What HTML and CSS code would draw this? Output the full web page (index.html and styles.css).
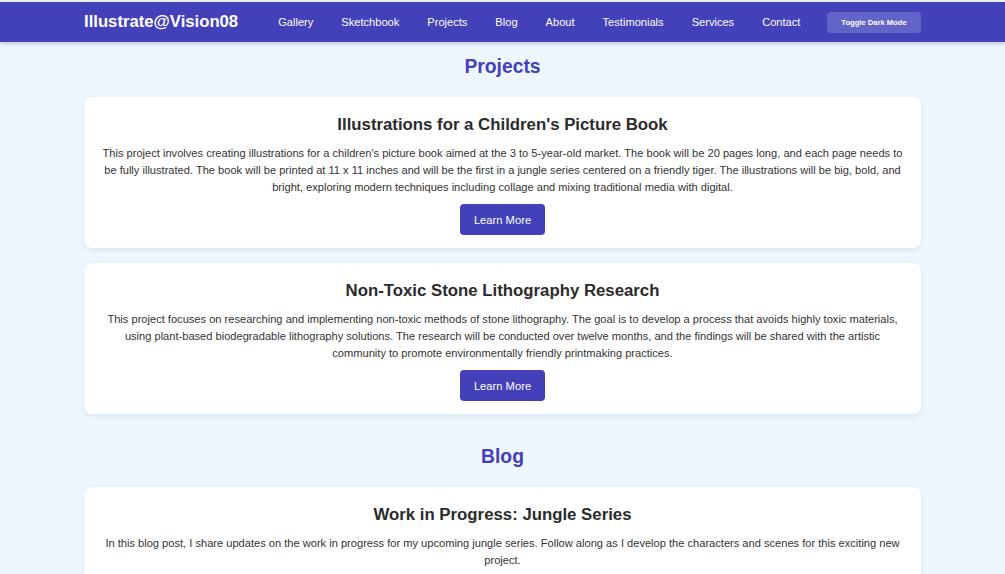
FILE: index.html
```html
<!DOCTYPE html>
<html lang="en">
<head>
<meta charset="utf-8">
<title>Illustrate@Vision08</title>
<link rel="stylesheet" href="styles.css">
</head>
<body>
<div class="topstrip"></div>
<header class="navbar">
  <div class="nav-inner">
    <div class="logo">Illustrate@Vision08</div>
    <nav class="links">
      <a href="#">Gallery</a>
      <a href="#">Sketchbook</a>
      <a href="#">Projects</a>
      <a href="#">Blog</a>
      <a href="#">About</a>
      <a href="#">Testimonials</a>
      <a href="#">Services</a>
      <a href="#">Contact</a>
    </nav>
    <button class="toggle">Toggle Dark Mode</button>
  </div>
</header>
<main class="content">
  <section class="section">
    <h2 class="section-title">Projects</h2>
    <article class="card">
      <h3 class="card-title">Illustrations for a Children's Picture Book</h3>
      <p class="card-text">This project involves creating illustrations for a children's picture book aimed at the 3 to 5-year-old market. The book will be 20 pages long, and each page needs to be fully illustrated. The book will be printed at 11 x 11 inches and will be the first in a jungle series centered on a friendly tiger. The illustrations will be big, bold, and bright, exploring modern techniques including collage and mixing traditional media with digital.</p>
      <button class="btn">Learn More</button>
    </article>
    <article class="card">
      <h3 class="card-title">Non-Toxic Stone Lithography Research</h3>
      <p class="card-text">This project focuses on researching and implementing non-toxic methods of stone lithography. The goal is to develop a process that avoids highly toxic materials, using plant-based biodegradable lithography solutions. The research will be conducted over twelve months, and the findings will be shared with the artistic community to promote environmentally friendly printmaking practices.</p>
      <button class="btn">Learn More</button>
    </article>
  </section>
  <section class="section">
    <h2 class="section-title">Blog</h2>
    <article class="card">
      <h3 class="card-title">Work in Progress: Jungle Series</h3>
      <p class="card-text">In this blog post, I share updates on the work in progress for my upcoming jungle series. Follow along as I develop the characters and scenes for this exciting new project.</p>
      <button class="btn">Read More</button>
    </article>
  </section>
</main>
</body>
</html>
```
FILE: styles.css
```css
* { box-sizing: border-box; }
html, body { margin: 0; padding: 0; }
body {
  background: #eef6ff;
  font-family: "Liberation Sans", Arial, Helvetica, sans-serif;
  color: #333;
  overflow: hidden;
}
.topstrip {
  height: 2px;
  background: #f2f2f4;
}
.navbar {
  background: #4341ba;
  height: 40px;
  box-shadow: 0 2px 4px rgba(0,0,0,0.18);
  position: relative;
  z-index: 1;
}
.nav-inner {
  width: 837px;
  margin: 0 auto;
  height: 100%;
  display: flex;
  align-items: center;
}
.logo {
  color: #fff;
  font-weight: bold;
  font-size: 16.7px;
  margin-right: 40px;
}
.links {
  display: flex;
  align-items: center;
  gap: 28px;
}
.links a {
  color: #fff;
  text-decoration: none;
  font-size: 11.1px;
}
.toggle {
  margin-left: auto;
  background: #6264c8;
  color: #fff;
  border: none;
  border-radius: 4px;
  font-family: inherit;
  font-size: 7.6px;
  font-weight: bold;
  white-space: nowrap;
  width: 94px;
  height: 21px;
  padding: 0;
}
.content {
  width: 837px;
  margin: 0 auto;
}
.section {
  padding-top: 13px;
  padding-bottom: 3px;
}
.section-title {
  color: #4341ba;
  font-size: 19.3px;
  line-height: 24px;
  text-align: center;
  margin: 0 0 18px;
}
.card {
  background: #fff;
  border-radius: 8px;
  box-shadow: 0 2px 6px rgba(0,0,0,0.08);
  padding: 18px 16px 13px;
  text-align: center;
  margin-bottom: 15px;
}
.card-title {
  font-size: 16.8px;
  line-height: 20px;
  margin: 0 0 10px;
  color: #2b2b2b;
}
.card-text {
  font-size: 11.1px;
  line-height: 17px;
  margin: 0 0 8px;
  color: #333;
}
.btn {
  background: #4341ba;
  color: #fff;
  border: none;
  border-radius: 4px;
  font-family: inherit;
  font-size: 11.2px;
  width: 85px;
  height: 31px;
  padding: 0;
}
```
